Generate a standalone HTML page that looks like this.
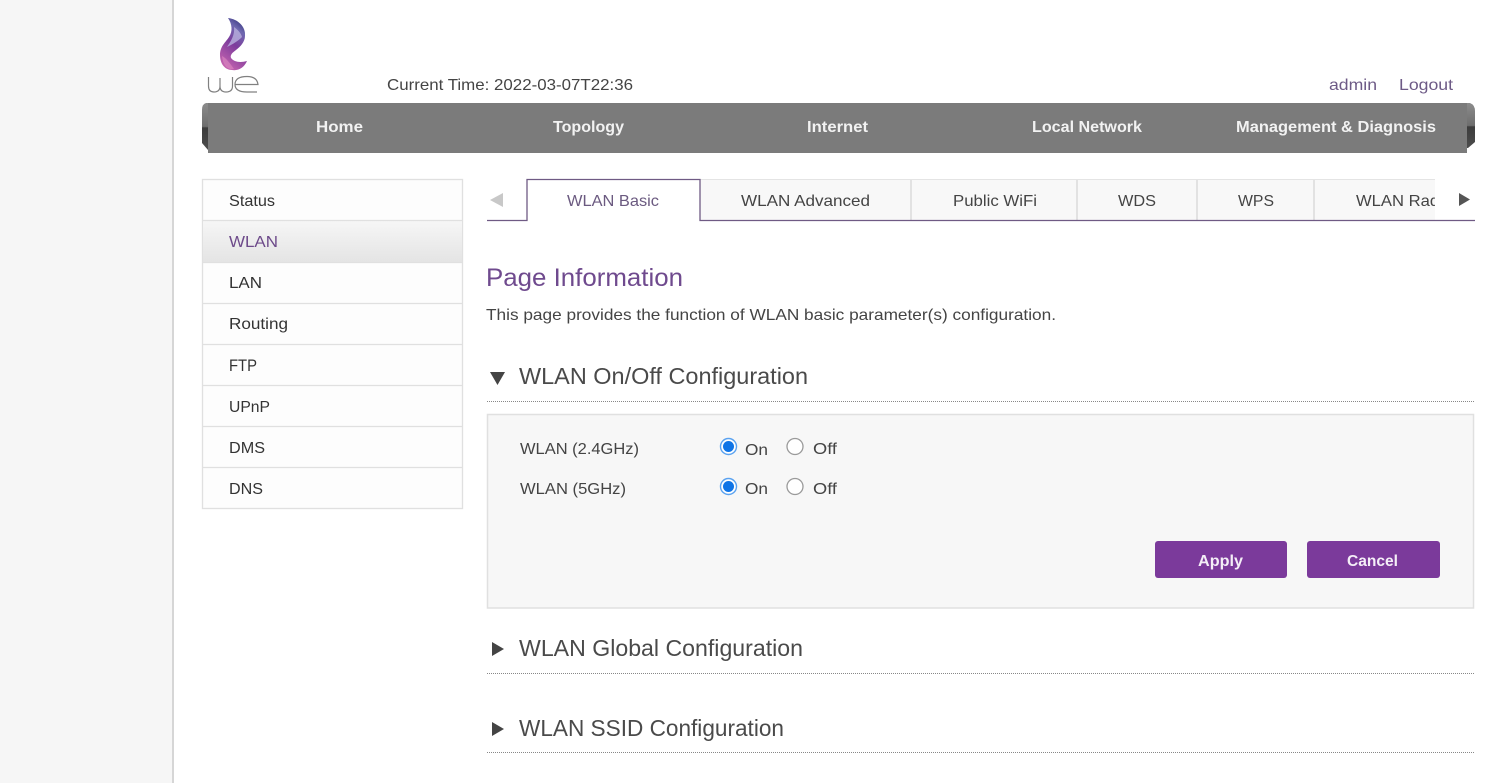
<!DOCTYPE html>
<html lang="en">
<head>
<meta charset="utf-8">
<title>WLAN Basic</title>
<style>
html,body{margin:0;padding:0;width:1500px;height:783px;overflow:hidden;background:#fff}
svg{display:block}
text{font-family:"Liberation Sans",sans-serif;font-size:16px;fill:#444}
.h{font-size:23px;fill:#4a4a4a}
.nav{fill:#f2f2f2;font-weight:bold;font-size:16px}
.side{fill:#333}
.btn{fill:#f4eef7;font-weight:bold;font-size:16px}
.lnk{fill:#6d5a86}
</style>
</head>
<body>
<svg width="1500" height="783" viewBox="0 0 1500 783" xmlns="http://www.w3.org/2000/svg">
<defs>
<linearGradient id="flame" x1="0.7" y1="0" x2="0.3" y2="1">
<stop offset="0" stop-color="#37367f"/>
<stop offset="0.2" stop-color="#6f68b0"/>
<stop offset="0.5" stop-color="#7d3c9c"/>
<stop offset="1" stop-color="#c765b0"/>
</linearGradient>
<linearGradient id="cap" x1="0" y1="0" x2="0" y2="1">
<stop offset="0" stop-color="#8c8c8c"/>
<stop offset="0.5" stop-color="#6e6e6e"/>
<stop offset="0.53" stop-color="#3c3c3c"/>
<stop offset="1" stop-color="#4c4c4c"/>
</linearGradient>
<linearGradient id="act" x1="0" y1="0" x2="0" y2="1">
<stop offset="0" stop-color="#f6f6f6"/>
<stop offset="1" stop-color="#e4e4e4"/>
</linearGradient>
</defs>

<!-- page background -->
<rect x="0" y="0" width="172" height="783" fill="#f6f6f6"/>
<rect x="172" y="0" width="2" height="783" fill="#d6d6d6"/>

<!-- logo -->
<path d="M228 18C238 19 246 27 245 36C245 42 240 47 236 50C232 53 230 55 231 58C234 62 240 63 247 61C244 68 238 71 232 70C225 70 220 64 220 55C220 46 226 42 229 37C233 31 232 24 228 18Z" fill="url(#flame)"/>
<path d="M234 27C238 30 241 33 242 37C238 41 233 44 227 47C231 41 235 35 234 27Z" fill="#b9b2de" opacity=".8"/>
<path d="M222 56C226 58 229 62 234 69C228 70 223 66 222 56Z" fill="#d884bf" opacity=".7"/>
<g fill="none" stroke="#808080" stroke-width="1.200">
<path d="M208.500 77V86Q208.500 92 214 92Q220 92 220 86V78V86Q220 92 226 92Q232.500 92 232.500 86V77"/>
<path d="M235 84.500H258Q257 76.500 247 76.500Q235 76.500 235 84.500Q235 92 247 92H257"/>
</g>

<!-- top line -->
<text x="387" y="90" textLength="246" lengthAdjust="spacingAndGlyphs">Current Time: 2022-03-07T22:36</text>
<text class="lnk" x="1329" y="90" textLength="48" lengthAdjust="spacingAndGlyphs">admin</text>
<text class="lnk" x="1399" y="90" textLength="54" lengthAdjust="spacingAndGlyphs">Logout</text>

<!-- nav bar -->
<path d="M210 103H206Q202 104 202 110V143L208 150H210Z" fill="url(#cap)"/>
<path d="M1465 103H1470Q1475 105 1475 111V142L1468 148H1465Z" fill="url(#cap)"/>
<rect x="208" y="103" width="1259" height="50" fill="#7b7b7b"/>
<text class="nav" x="316" y="132" textLength="47" lengthAdjust="spacingAndGlyphs">Home</text>
<text class="nav" x="553" y="132" textLength="71" lengthAdjust="spacingAndGlyphs">Topology</text>
<text class="nav" x="807" y="132" textLength="61" lengthAdjust="spacingAndGlyphs">Internet</text>
<text class="nav" x="1032" y="132" textLength="110" lengthAdjust="spacingAndGlyphs">Local Network</text>
<text class="nav" x="1236" y="132" textLength="200" lengthAdjust="spacingAndGlyphs">Management &amp; Diagnosis</text>

<!-- sidebar -->
<rect x="202.500" y="179.500" width="260" height="329" fill="#fdfdfd" stroke="#e0e0e0" stroke-width="1.300"/>
<rect x="203" y="221" width="259" height="41" fill="url(#act)"/>
<g stroke="#e0e0e0" stroke-width="1.200">
<path d="M203 220.500H462M203 262.500H462M203 303.500H462M203 344.500H462M203 385.500H462M203 426.500H462M203 467.500H462"/>
</g>
<text class="side" x="229" y="206" textLength="46" lengthAdjust="spacingAndGlyphs">Status</text>
<text x="229" y="247" textLength="49" lengthAdjust="spacingAndGlyphs" style="fill:#6d4a8a">WLAN</text>
<text class="side" x="229" y="288" textLength="33" lengthAdjust="spacingAndGlyphs">LAN</text>
<text class="side" x="229" y="329" textLength="59" lengthAdjust="spacingAndGlyphs">Routing</text>
<text class="side" x="229" y="371" textLength="28" lengthAdjust="spacingAndGlyphs" style="font-size:17px">FTP</text>
<text class="side" x="229" y="412" textLength="41" lengthAdjust="spacingAndGlyphs">UPnP</text>
<text class="side" x="229" y="453" textLength="36" lengthAdjust="spacingAndGlyphs">DMS</text>
<text class="side" x="229" y="494" textLength="34" lengthAdjust="spacingAndGlyphs">DNS</text>

<!-- tabs -->
<rect x="700" y="180" width="735" height="40" fill="#f8f8f8"/>
<path d="M700 179.500H1435" stroke="#e4e4e4" fill="none"/>
<path d="M911 180V220M1077 180V220M1197 180V220M1314 180V220" stroke="#dadada" stroke-width="1.500" fill="none"/>
<path d="M487 220.500H527V179.500H700V220.500H1475" stroke="#6f5a84" stroke-width="1.300" fill="none"/>
<path d="M490 200L503 193V207Z" fill="#c8c8c8"/>
<path d="M1470 199.500L1459 193V206Z" fill="#555"/>
<text x="567" y="206" textLength="92" lengthAdjust="spacingAndGlyphs" style="fill:#6b5a80">WLAN Basic</text>
<text x="741" y="206" textLength="129" lengthAdjust="spacingAndGlyphs">WLAN Advanced</text>
<text x="953" y="206" textLength="84" lengthAdjust="spacingAndGlyphs">Public WiFi</text>
<text x="1118" y="206" textLength="38" lengthAdjust="spacingAndGlyphs">WDS</text>
<text x="1238" y="206" textLength="36" lengthAdjust="spacingAndGlyphs">WPS</text>
<svg x="1314" y="180" width="121" height="40" viewBox="1314 180 121 40">
<text x="1356" y="206" textLength="96" lengthAdjust="spacingAndGlyphs">WLAN Radio</text>
</svg>

<!-- page info -->
<text x="486" y="286" textLength="197" lengthAdjust="spacingAndGlyphs" style="font-size:25px;fill:#6f4a8e">Page Information</text>
<text x="486" y="320" textLength="570" lengthAdjust="spacingAndGlyphs">This page provides the function of WLAN basic parameter(s) configuration.</text>

<!-- section 1 -->
<path d="M490 372H505L497.500 385Z" fill="#444"/>
<text class="h" x="519" y="384" textLength="289" lengthAdjust="spacingAndGlyphs">WLAN On/Off Configuration</text>
<path d="M487 401.500H1475" stroke="#888" stroke-dasharray="1 1" fill="none"/>

<rect x="487.500" y="414.500" width="986" height="193.500" fill="#f7f7f7" stroke="#e0e0e0" stroke-width="1.500"/>
<text x="520" y="454" textLength="119" lengthAdjust="spacingAndGlyphs">WLAN (2.4GHz)</text>
<text x="520" y="494" textLength="106" lengthAdjust="spacingAndGlyphs">WLAN (5GHz)</text>

<circle cx="728.500" cy="446.500" r="8" fill="#fff" stroke="#5aa2f0" stroke-width="1.400"/>
<circle cx="728.500" cy="446.500" r="5.500" fill="#0f74e6"/>
<text x="745" y="455" textLength="23" lengthAdjust="spacingAndGlyphs">On</text>
<circle cx="795" cy="446.500" r="8" fill="#fff" stroke="#9a9a9a" stroke-width="1.300"/>
<text x="813" y="454" textLength="24" lengthAdjust="spacingAndGlyphs">Off</text>

<circle cx="728.500" cy="486.500" r="8" fill="#fff" stroke="#5aa2f0" stroke-width="1.400"/>
<circle cx="728.500" cy="486.500" r="5.500" fill="#0f74e6"/>
<text x="745" y="494" textLength="23" lengthAdjust="spacingAndGlyphs">On</text>
<circle cx="795" cy="486.500" r="8" fill="#fff" stroke="#9a9a9a" stroke-width="1.300"/>
<text x="813" y="494" textLength="24" lengthAdjust="spacingAndGlyphs">Off</text>

<rect x="1155" y="541" width="132" height="37" rx="3" fill="#7b3a9b"/>
<rect x="1307" y="541" width="133" height="37" rx="3" fill="#7b3a9b"/>
<text class="btn" x="1198" y="566" textLength="45" lengthAdjust="spacingAndGlyphs">Apply</text>
<text class="btn" x="1347" y="566" textLength="51" lengthAdjust="spacingAndGlyphs">Cancel</text>

<!-- section 2 -->
<path d="M492 642V656L504 649Z" fill="#444"/>
<text class="h" x="519" y="656" textLength="284" lengthAdjust="spacingAndGlyphs">WLAN Global Configuration</text>
<path d="M487 673.500H1475" stroke="#888" stroke-dasharray="1 1" fill="none"/>

<!-- section 3 -->
<path d="M492 722V736L504 729Z" fill="#444"/>
<text class="h" x="519" y="736" textLength="265" lengthAdjust="spacingAndGlyphs">WLAN SSID Configuration</text>
<path d="M487 752.500H1475" stroke="#888" stroke-dasharray="1 1" fill="none"/>
</svg>
</body>
</html>
